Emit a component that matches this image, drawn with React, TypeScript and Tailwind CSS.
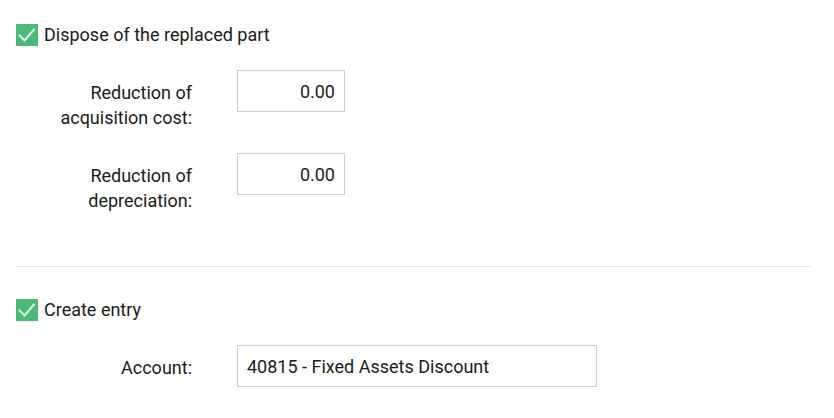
import React from 'react';

function Check({ label }: { label: string }) {
  return (
    <div className="flex h-[22px] items-center gap-[6px]">
      <span className="flex h-[22px] w-[22px] items-center justify-center bg-[#4cb97a]">
        <svg width="22" height="22" viewBox="0 0 22 22" fill="none">
          <path d="M3.5 11.5 L8.5 16.5 L18 5.5" stroke="#d9f2e2" strokeWidth="2" strokeLinecap="square" />
        </svg>
      </span>
      <span className="leading-[22px]">{label}</span>
    </div>
  );
}

function Field({ label, value, wide }: { label: React.ReactNode; value: string; wide?: boolean }) {
  return (
    <div className="flex items-start gap-[45px]">
      <div className="w-[176px] pt-[10px] text-right leading-[25px]">{label}</div>
      <div
        className={`flex h-[42px] items-center border border-[#cccccc] px-[9px] leading-[25px] ${
          wide ? 'w-[360px] justify-start' : 'w-[108px] justify-end'
        }`}
      >
        {value}
      </div>
    </div>
  );
}

export default function App() {
  return (
    <div
      className="min-h-[418px] bg-white pl-4 pr-[23px] pt-6 text-[18px] text-[#1b1b1b]"
      style={{ fontFamily: 'Roboto, "Noto Sans", sans-serif' }}
    >
      <Check label="Dispose of the replaced part" />
      <div className="mt-6 flex flex-col gap-[23px]">
        <Field label={<>Reduction of<br />acquisition cost:</>} value="0.00" />
        <Field label={<>Reduction of<br />depreciation:</>} value="0.00" />
      </div>
      <div className="mt-[53px] h-px bg-[#e8e8e8]" />
      <div className="mt-[32px]">
        <Check label="Create entry" />
      </div>
      <div className="mt-6">
        <Field label="Account:" value="40815 - Fixed Assets Discount" wide />
      </div>
    </div>
  );
}
